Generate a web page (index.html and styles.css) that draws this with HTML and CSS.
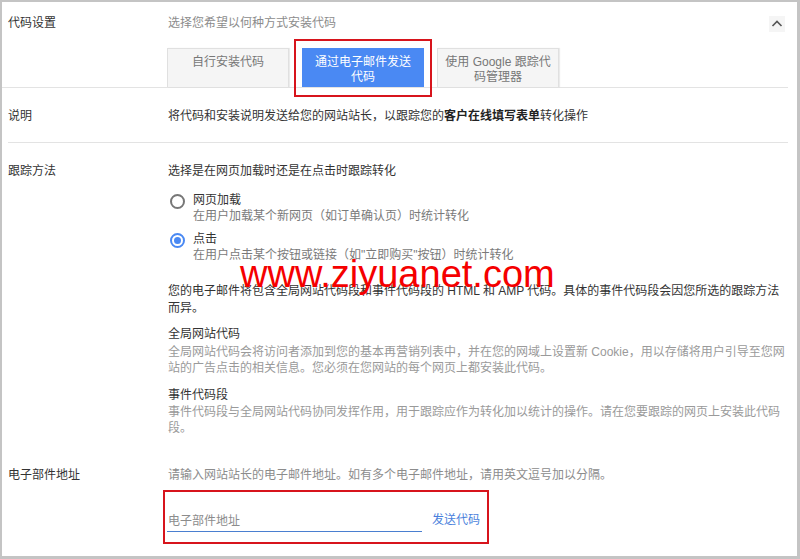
FILE: index.html
```html
<!DOCTYPE html>
<html lang="zh-CN">
<head>
    <meta charset="UTF-8">
    <meta name="viewport" content="width=device-width, initial-scale=1.0">
    <title>代码设置</title>
    <link rel="stylesheet" href="styles.css">
</head>
<body>
    <div class="panel">
        <section class="row row-setup">
            <div class="row-label">代码设置</div>
            <div class="row-body">
                <div class="setup-head">
                    <span class="hint">选择您希望以何种方式安装代码</span>
                    <button class="collapse" type="button" aria-label="收起">
                        <svg width="16" height="16" viewBox="0 0 16 16"><polyline points="3.5,10 8,5.5 12.5,10" fill="none" stroke="#555" stroke-width="1.6"/></svg>
                    </button>
                </div>
                <div class="tabs">
                    <div class="tab">自行安装代码</div>
                    <div class="tab tab-active">通过电子邮件发送代码</div>
                    <div class="tab">使用 Google 跟踪代码管理器</div>
                </div>
            </div>
        </section>

        <section class="row row-divided">
            <div class="row-label">说明</div>
            <div class="row-body">将代码和安装说明发送给您的网站站长，以跟踪您的<strong>客户在线填写表单</strong>转化操作</div>
        </section>

        <section class="row row-method">
            <div class="row-label">跟踪方法</div>
            <div class="row-body">
                <div>选择是在网页加载时还是在点击时跟踪转化</div>
                <div class="options">
                    <label class="option">
                        <span class="radio"></span>
                        <span class="option-text">
                            <span class="option-title">网页加载</span>
                            <span class="option-desc">在用户加载某个新网页（如订单确认页）时统计转化</span>
                        </span>
                    </label>
                    <label class="option">
                        <span class="radio radio-checked"></span>
                        <span class="option-text">
                            <span class="option-title">点击</span>
                            <span class="option-desc">在用户点击某个按钮或链接（如"立即购买"按钮）时统计转化</span>
                        </span>
                    </label>
                </div>
                <p class="note">您的电子邮件将包含全局网站代码段和事件代码段的 HTML 和 AMP 代码。具体的事件代码段会因您所选的跟踪方法而异。</p>
                <div class="snippet">
                    <div class="snippet-title">全局网站代码</div>
                    <div class="snippet-desc">全局网站代码会将访问者添加到您的基本再营销列表中，并在您的网域上设置新 Cookie，用以存储将用户引导至您网站的广告点击的相关信息。您必须在您网站的每个网页上都安装此代码。</div>
                </div>
                <div class="snippet">
                    <div class="snippet-title">事件代码段</div>
                    <div class="snippet-desc">事件代码段与全局网站代码协同发挥作用，用于跟踪应作为转化加以统计的操作。请在您要跟踪的网页上安装此代码段。</div>
                </div>
            </div>
        </section>

        <section class="row row-email">
            <div class="row-label">电子部件地址</div>
            <div class="row-body">
                <div class="hint">请输入网站站长的电子邮件地址。如有多个电子邮件地址，请用英文逗号加以分隔。</div>
                <div class="send">
                    <input class="email-input" type="text" placeholder="电子部件地址">
                    <a class="send-link" href="#">发送代码</a>
                </div>
            </div>
        </section>
    </div>

    <div class="mark mark-tab"></div>
    <div class="mark mark-email"></div>
    <div class="watermark">www.ziyuanet.com</div>
</body>
</html>
```

FILE: styles.css
```css
body {
    margin: 0;
    position: relative;
    font-family: Arial, 'Liberation Sans', 'Noto Sans CJK SC', sans-serif;
    font-size: 12px;
    line-height: 17px;
    color: #333;
    background: #ffffff;
}

.panel {
    box-sizing: border-box;
    height: 559px;
    border: solid #c4c4c4;
    border-width: 2px 3px 3px 2px;
    padding: 0 9px 0 6px;
    background: #ffffff;
}

.row {
    display: flex;
}

.row-label {
    width: 160px;
    flex-shrink: 0;
}

.row-body {
    flex: 1;
    min-width: 0;
}

.hint {
    color: #8c8c8c;
}

/* code settings */
.row-setup {
    margin-left: -6px;
    padding: 13px 0 0 6px;
    border-bottom: 1px solid #e3e3e3;
}

.setup-head {
    display: flex;
    justify-content: space-between;
    align-items: center;
}

.collapse {
    width: 16px;
    height: 16px;
    padding: 0;
    margin-right: 3px;
    border: none;
    background: #f5f5f5;
    display: flex;
    cursor: pointer;
}

.tabs {
    display: flex;
    gap: 13px;
    margin-top: 16px;
    margin-left: -1px;
}

.tab {
    box-sizing: border-box;
    width: 122px;
    height: 39px;
    padding: 6px 7px 1px;
    border: 1px solid #e0e0e0;
    border-bottom: none;
    background: #f5f5f5;
    box-shadow: 1px 0 1px rgba(0, 0, 0, 0.08);
    color: #777;
    line-height: 15px;
    text-align: center;
}

.tab-active {
    background: #4a89f3;
    border-color: #4a89f3;
    box-shadow: none;
    color: #ffffff;
}

/* description */
.row-divided {
    padding: 20px 0 17px;
    border-bottom: 1px solid #e3e3e3;
}

.row-divided strong {
    color: #222;
}

/* tracking method */
.row-method {
    padding: 20px 0 12px;
}

.options {
    margin-top: 12px;
}

.option {
    display: flex;
    line-height: 16px;
    margin-bottom: 7px;
}

.radio {
    box-sizing: border-box;
    width: 15px;
    height: 15px;
    margin: 2px 8px 0 2px;
    border: 2px solid #777;
    border-radius: 50%;
    flex-shrink: 0;
    display: flex;
    align-items: center;
    justify-content: center;
}

.radio-checked {
    border-color: #4a89f3;
}

.radio-checked::after {
    content: '';
    width: 7px;
    height: 7px;
    border-radius: 50%;
    background: #4a89f3;
}

.option-text {
    display: flex;
    flex-direction: column;
}

.option-desc {
    color: #7a7a7a;
}

.note {
    margin: 20px 0 0;
    color: #333;
}

.snippet {
    margin-top: 9px;
}

.snippet + .snippet {
    margin-top: 11px;
}

.snippet-desc {
    margin-top: 1px;
    line-height: 16px;
    color: #9a9a9a;
}

.snippet + .snippet .snippet-desc {
    margin-top: 0;
}

/* email */
.row-email {
    padding-top: 19px;
}

.send {
    display: flex;
    align-items: center;
    gap: 10px;
    margin-top: 26px;
    margin-left: -1px;
}

.email-input {
    box-sizing: border-box;
    width: 255px;
    height: 22px;
    padding: 0 0 0 1px;
    border: none;
    border-bottom: 1px solid #4a7fd0;
    font: inherit;
    color: #333;
    outline: none;
}

.email-input::placeholder {
    color: #8c8c8c;
}

.send-link {
    margin-bottom: 2px;
    color: #4a7fdc;
    text-decoration: none;
}

/* annotations over the screenshot */
.mark {
    position: absolute;
    box-sizing: border-box;
    border: 2px solid #d7141c;
}

.mark-tab {
    left: 294px;
    top: 39px;
    width: 138px;
    height: 58px;
}

.mark-email {
    left: 163px;
    top: 490px;
    width: 326px;
    height: 54px;
}

.watermark {
    position: absolute;
    left: 240px;
    top: 255px;
    font-family: Arial, 'Liberation Sans', sans-serif;
    font-size: 38px;
    line-height: 38px;
    color: #f50000;
    white-space: nowrap;
}
```
